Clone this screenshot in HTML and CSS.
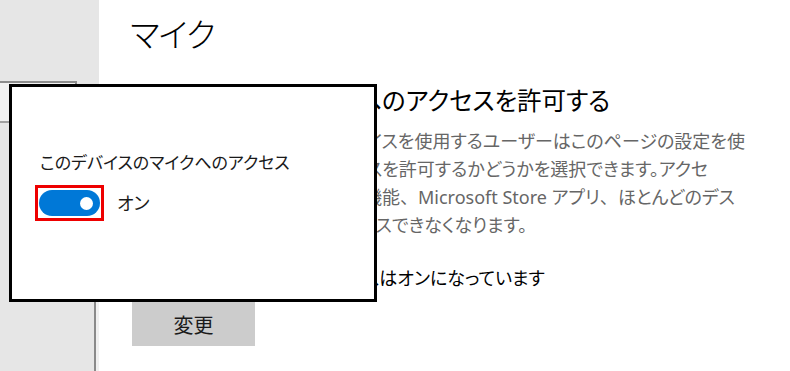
FILE: index.html
```html
<!DOCTYPE html>
<html lang="ja">
<head>
<meta charset="utf-8">
<title>マイク</title>
<link rel="stylesheet" href="styles.css">
</head>
<body>
<div class="app">
  <aside class="sidebar">
    <div class="sidebar-top"></div>
    <div class="search-box"></div>
    <div class="sidebar-pane"></div>
  </aside>
  <main class="content">
    <h1 class="title">マイク</h1>
    <h2 class="subtitle">このデバイスでのマイクへのアクセスを許可する</h2>
    <p class="desc">アクセスを許可すると、このデバイスを使用するユーザーはこのページの設定を使<br>って、アプリにマイクへのアクセスを許可するかどうかを選択できます。アクセ<br>スを拒否すると<span class="punct">、</span>Windows の機能<span class="punct">、</span>Microsoft Store アプリ<span class="punct">、</span>ほとんどのデス<br>クトップ アプリはマイクにアクセスできなくなります。</p>
    <p class="status">このデバイスのマイクへのアクセスはオンになっています</p>
    <button class="btn" type="button">変更</button>
  </main>
</div>
<div class="popup">
  <div class="popup-label">このデバイスのマイクへのアクセス</div>
  <div class="toggle-row">
    <span class="highlight"><span class="toggle"><span class="knob"></span></span></span>
    <span class="toggle-text">オン</span>
  </div>
</div>
</body>
</html>
```
FILE: styles.css
```css
html, body {
  margin: 0;
  padding: 0;
}
body {
  width: 790px;
  height: 371px;
  overflow: hidden;
  background: #fff;
  font-family: "Noto Sans", "Noto Sans CJK JP", sans-serif;
  font-feature-settings: "palt";
  color: #000;
  position: relative;
}
.app {
  display: grid;
  grid-template-columns: 99px 1fr;
  height: 371px;
}
.sidebar {
  background: #e6e6e6;
  display: flex;
  flex-direction: column;
}
.sidebar-top {
  height: 81px;
}
.search-box {
  width: 75px;
  height: 38px;
  background: #f1f1f1;
  border-top: 2px solid #8c8c8c;
  border-right: 2px solid #8c8c8c;
  border-bottom: 2px solid #a0a0a0;
}
.sidebar-pane {
  flex: 1;
  margin-top: 4px;
  margin-right: 3px;
  border-right: 2px solid #8a8a8a;
  box-shadow: 3px 0 0 #f0f0f0;
}
.content {
  padding-left: 31px;
  white-space: nowrap;
  overflow: hidden;
}
.title {
  margin: 13px 0 0;
  font-size: 33px;
  letter-spacing: -1px;
  line-height: 44px;
  font-weight: 300;
}
.subtitle {
  margin: 28px 0 0;
  font-size: 24.5px;
  line-height: 32px;
  font-weight: 400;
  text-indent: -18px;
}
.desc {
  margin: 10px 0 0;
  font-size: 18px;
  line-height: 28px;
  color: #666;
  text-indent: -5px;
}
.punct {
  font-feature-settings: "palt" 0;
}
.status {
  margin: 26px 0 0;
  font-size: 18px;
  line-height: 26px;
  text-indent: -15px;
}
.btn {
  display: block;
  margin: 11px 0 0 2px;
  width: 123px;
  height: 44px;
  border: none;
  background: #cccccc;
  font-family: inherit;
  font-size: 20px;
  color: #1a1a1a;
  padding: 0;
}
.popup {
  position: absolute;
  left: 9px;
  top: 84px;
  width: 362px;
  height: 212px;
  border: 3px solid #000;
  background: #fff;
}
.popup-label {
  margin: 64px 0 0 28px;
  font-size: 17px;
  line-height: 24px;
  color: #1a1a1a;
}
.toggle-row {
  display: flex;
  align-items: center;
  gap: 13px;
  margin: 10px 0 0 23px;
}
.highlight {
  display: flex;
  align-items: center;
  justify-content: center;
  width: 63px;
  height: 30px;
  border: 3px solid #ee0000;
}
.toggle {
  position: relative;
  display: block;
  width: 61px;
  height: 26px;
  border-radius: 13px;
  background: #0078d7;
}
.knob {
  position: absolute;
  right: 7px;
  top: 6.5px;
  width: 13px;
  height: 13px;
  border-radius: 50%;
  background: #fff;
}
.toggle-text {
  font-size: 18px;
  line-height: 26px;
  color: #1a1a1a;
}
```
